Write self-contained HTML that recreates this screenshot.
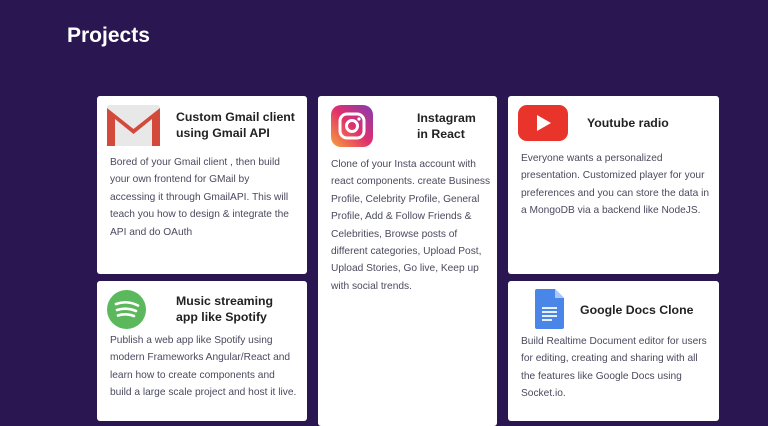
<!DOCTYPE html>
<html><head><style>
body{margin:0;width:768px;height:406px;background:#2a1650;overflow:hidden;font-family:"Liberation Sans",sans-serif;position:relative}
h1{position:absolute;left:67px;top:24px;margin:0;color:#fff;font-size:21px;font-weight:bold}
.c{position:absolute;background:#fff;border-radius:3px}
.t{position:absolute;font-weight:bold;font-size:12.3px;color:#222;line-height:16px;white-space:nowrap}
.b{position:absolute;font-size:10.2px;color:#4a4a5e;line-height:17.4px;white-space:nowrap}
svg{position:absolute}
</style></head><body>
<h1>Projects</h1>
<div class="c" style="left:97px;top:96px;width:210px;height:178px"></div>
<div class="c" style="left:97px;top:281px;width:210px;height:140px"></div>
<div class="c" style="left:318px;top:96px;width:179px;height:330px"></div>
<div class="c" style="left:508px;top:96px;width:211px;height:178px"></div>
<div class="c" style="left:508px;top:281px;width:211px;height:140px"></div>

<svg style="left:107px;top:105px" width="53" height="41" viewBox="0 0 53 41"><rect x="0" y="0" width="53" height="41" rx="3" fill="#e8e8e8"/><path d="M0 3 L26.5 24 L53 3 L53 41 L45 41 L45 14 L26.5 29 L8 14 L8 41 L0 41Z" fill="#d44a3a"/></svg>
<div class="t" style="left:176px;top:109px">Custom Gmail client<br>using Gmail API</div>
<div class="b" style="left:110px;top:154px">Bored of your Gmail client , then build<br>your own frontend for GMail by<br>accessing it through GmailAPI. This will<br>teach you how to design &amp; integrate the<br>API and do OAuth</div>

<svg style="left:331px;top:105px" width="42" height="42" viewBox="0 0 42 42"><defs><linearGradient id="g" x1="0" y1="1" x2="1" y2="0"><stop offset="0" stop-color="#f9a03a"/><stop offset=".5" stop-color="#e1306c"/><stop offset="1" stop-color="#833ab4"/></linearGradient></defs><rect width="42" height="42" rx="10" fill="url(#g)"/><rect x="9" y="9" width="24" height="24" rx="7" fill="none" stroke="#fff" stroke-width="3"/><circle cx="21" cy="21" r="5.5" fill="none" stroke="#fff" stroke-width="3"/><circle cx="28" cy="14" r="1.6" fill="#fff"/></svg>
<div class="t" style="left:417px;top:110px">Instagram<br>in React</div>
<div class="b" style="left:331px;top:156px">Clone of your Insta account with<br>react components. create Business<br>Profile, Celebrity Profile, General<br>Profile, Add &amp; Follow Friends &amp;<br>Celebrities, Browse posts of<br>different categories, Upload Post,<br>Upload Stories, Go live, Keep up<br>with social trends.</div>

<svg style="left:518px;top:105px" width="50" height="36" viewBox="0 0 50 36"><rect width="50" height="36" rx="9" fill="#e8342a"/><path d="M19 10 L33 18 L19 26Z" fill="#fff"/></svg>
<div class="t" style="left:587px;top:115px">Youtube radio</div>
<div class="b" style="left:521px;top:150px">Everyone wants a personalized<br>presentation. Customized player for your<br>preferences and you can store the data in<br>a MongoDB via a backend like NodeJS.</div>

<svg style="left:107px;top:290px" width="39" height="39" viewBox="0 0 39 39"><circle cx="19.5" cy="19.5" r="19.5" fill="#5cb85c"/><path d="M9 14 Q20 10 31 15.5 M10 20 Q20 17 29 21 M11 25.5 Q19 23 27 26" fill="none" stroke="#fff" stroke-width="2.6" stroke-linecap="round"/></svg>
<div class="t" style="left:176px;top:293px">Music streaming<br>app like Spotify</div>
<div class="b" style="left:110px;top:332px">Publish a web app like Spotify using<br>modern Frameworks Angular/React and<br>learn how to create components and<br>build a large scale project and host it live.</div>

<svg style="left:535px;top:289px" width="29" height="40" viewBox="0 0 29 40"><path d="M2 0 H20 L29 9 V38 Q29 40 27 40 H2 Q0 40 0 38 V2 Q0 0 2 0Z" fill="#4a86e8"/><path d="M20 0 V9 H29Z" fill="#a8c7fa"/><path d="M7 19 H22 M7 23 H22 M7 27 H22 M7 31 H17" stroke="#fff" stroke-width="1.8"/></svg>
<div class="t" style="left:580px;top:302px">Google Docs Clone</div>
<div class="b" style="left:521px;top:333px">Build Realtime Document editor for users<br>for editing, creating and sharing with all<br>the features like Google Docs using<br>Socket.io.</div>
</body></html>
